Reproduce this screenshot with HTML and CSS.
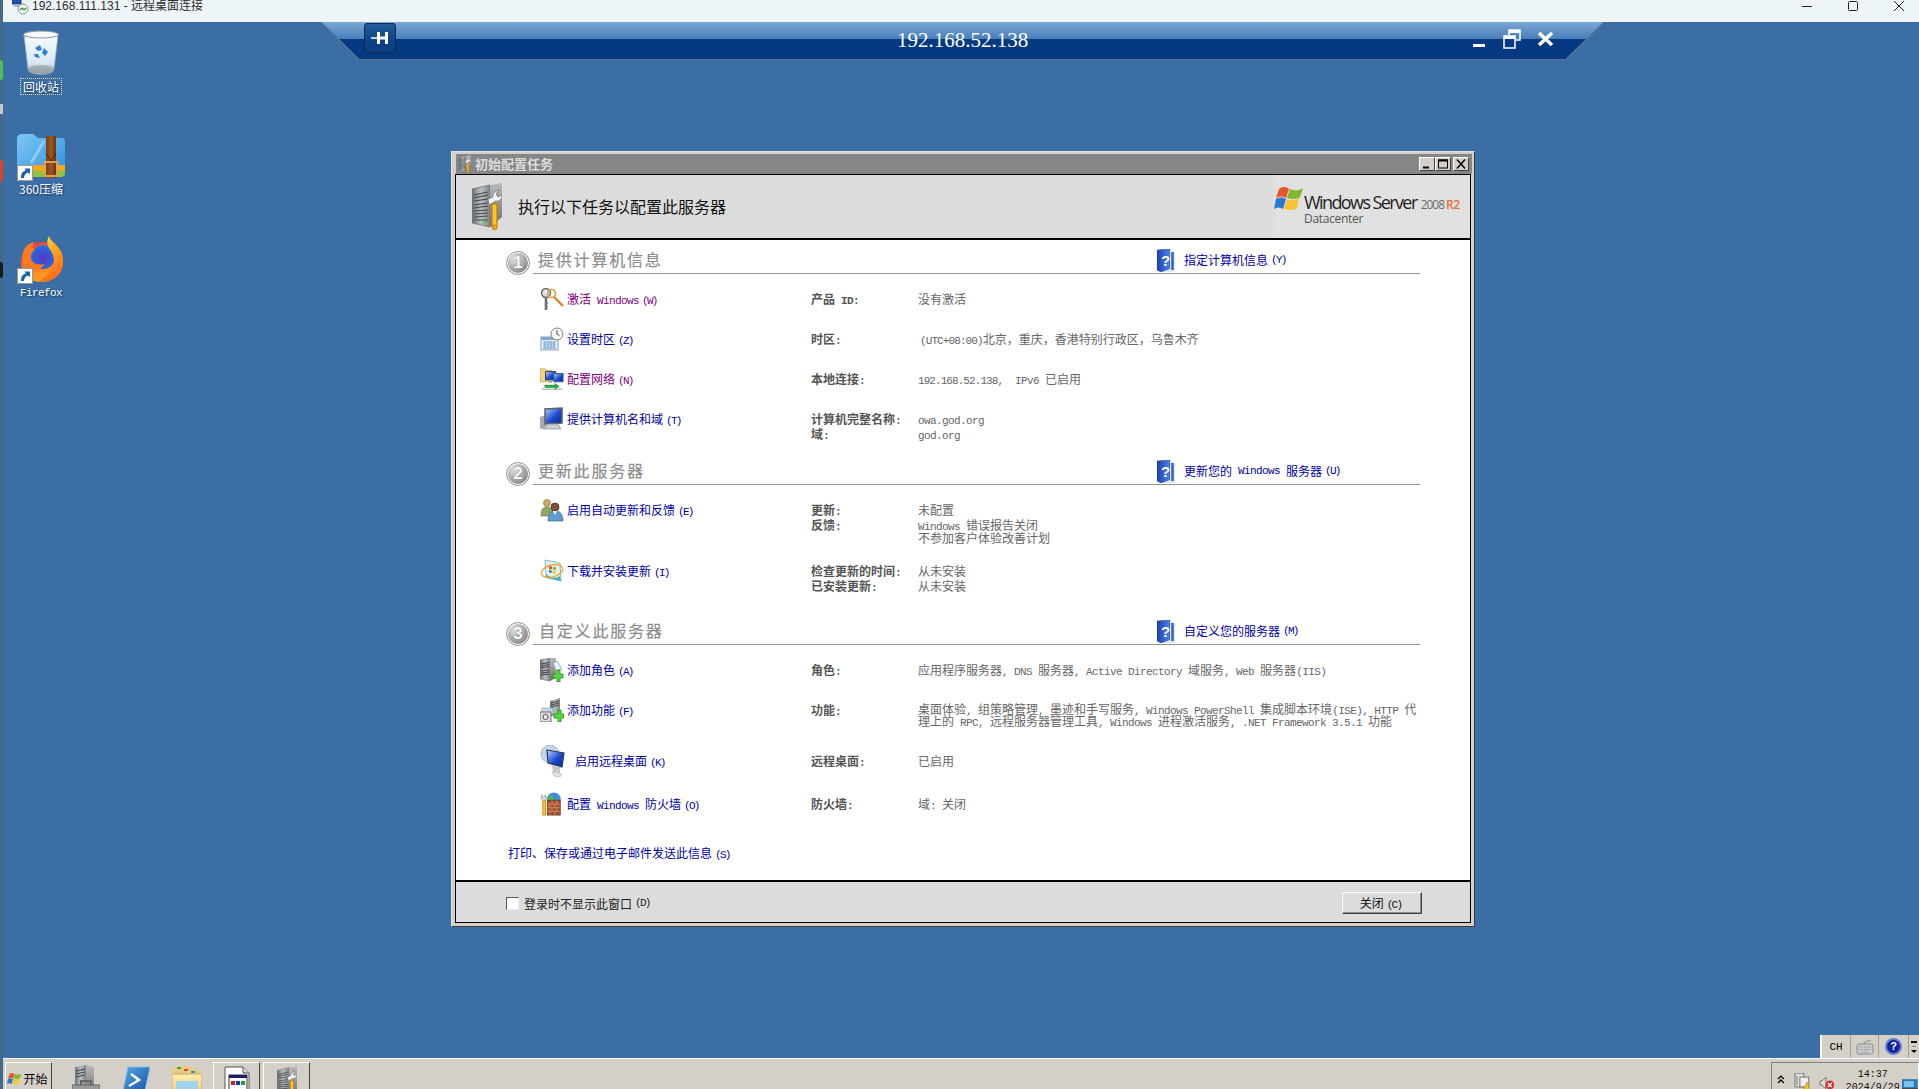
FILE: index.html
```html
<!DOCTYPE html>
<html lang="zh-CN">
<head>
<meta charset="utf-8">
<title>192.168.111.131 - 远程桌面连接</title>
<link rel="stylesheet" href="styles.css">
</head>
<body>
<svg class="defs" aria-hidden="true">
<defs>
<linearGradient id="gFront" x1="0" y1="0" x2="1" y2="0"><stop offset="0" stop-color="#6e7378"/><stop offset=".5" stop-color="#b9bec2"/><stop offset="1" stop-color="#7f8488"/></linearGradient>
<linearGradient id="gSide" x1="0" y1="0" x2="0" y2="1"><stop offset="0" stop-color="#b8b8b8"/><stop offset="1" stop-color="#707070"/></linearGradient>
<linearGradient id="gBlueScreen" x1="0" y1="0" x2="1" y2="1"><stop offset="0" stop-color="#bcd6fa"/><stop offset=".55" stop-color="#1c49d0"/><stop offset="1" stop-color="#0a2590"/></linearGradient>
<linearGradient id="gBook" x1="0" y1="0" x2="1" y2="0"><stop offset="0" stop-color="#1b3fb3"/><stop offset="1" stop-color="#4f86e8"/></linearGradient>
<linearGradient id="gBin" x1="0" y1="0" x2="0" y2="1"><stop offset="0" stop-color="#f6fbfe"/><stop offset=".72" stop-color="#d8e8f3"/><stop offset="1" stop-color="#8d979d"/></linearGradient>
<linearGradient id="gZip" x1="0" y1="0" x2="1" y2="1"><stop offset="0" stop-color="#7cc8f6"/><stop offset="1" stop-color="#2f8fdc"/></linearGradient>
<linearGradient id="gBelt" x1="0" y1="0" x2="1" y2="0"><stop offset="0" stop-color="#7a3c12"/><stop offset=".5" stop-color="#9a5a22"/><stop offset="1" stop-color="#6a3210"/></linearGradient>
<radialGradient id="gGlobe" cx=".5" cy=".55" r=".6"><stop offset="0" stop-color="#5a35c8"/><stop offset=".7" stop-color="#2b62dc"/><stop offset="1" stop-color="#2a86e8"/></radialGradient>
<linearGradient id="gFox" x1="0" y1="0" x2=".4" y2="1"><stop offset="0" stop-color="#ffe23a"/><stop offset=".5" stop-color="#ffa51e"/><stop offset="1" stop-color="#ff6a1e"/></linearGradient>
<linearGradient id="gFoxL" x1="0" y1="0" x2=".4" y2="1"><stop offset="0" stop-color="#ee2f44"/><stop offset=".5" stop-color="#ff6a24"/><stop offset="1" stop-color="#ffa01e"/></linearGradient>
<linearGradient id="gFolder" x1="0" y1="0" x2="0" y2="1"><stop offset="0" stop-color="#fff0b4"/><stop offset="1" stop-color="#e8c46a"/></linearGradient>
<linearGradient id="gPs" x1="0" y1="0" x2="1" y2="1"><stop offset="0" stop-color="#5aa6e2"/><stop offset="1" stop-color="#0f4ea0"/></linearGradient>

<symbol id="flag" viewBox="0 0 30 28">
<path d="M5 4C9 1 13 2 15 4L12 13C9 11 6 11 2 13Z" fill="#e8542c"/>
<path d="M16 4C20 6 25 6 29 3L26 12C22 15 17 14 13 13Z" fill="#7fb828"/>
<path d="M2 14C5 12 9 12 12 14L9 24C6 22 3 22 0 24Z" fill="#2a78d0"/>
<path d="M13 14C17 16 21 16 25 13L23 23C19 26 14 25 10 24Z" fill="#f7c52e"/>
</symbol>

<symbol id="config" viewBox="0 0 30 47">
<path d="M0 6 18 2V44L0 40Z" fill="url(#gFront)" stroke="#5b5f63" stroke-width=".6"/>
<path d="M2 12 16 9M2 15 16 12M2 18 16 16M2 22 16 20M2 25 16 23M2 28 16 27M2 31 16 30M2 34 16 33M2 37 16 37" stroke="#43484c" stroke-width="1.2"/>
<path d="M18 2 30 0V34L18 44Z" fill="url(#gSide)"/>
<rect x="11" y="38" width="3" height="2.4" fill="#4ed43a"/>
<path d="M16 16 21 14C20 11 23 8 27 7L24 11 26 14 30 12C30 16 27 19 24 18L17 22Z" fill="#f4f4f4" stroke="#6a6a6a" stroke-width=".7"/>
<rect x="20" y="21" width="5" height="23" fill="#f7c52e" stroke="#c67a10" stroke-width="1.2"/>
<rect x="20.6" y="42" width="4" height="5" rx="1.5" fill="#eaa518" stroke="#c67a10" stroke-width=".8"/>
</symbol>

<symbol id="help" viewBox="0 0 18 23">
<path d="M0 1 13 0V20L4 23 0 21Z" fill="url(#gBook)" stroke="#1b3590" stroke-width=".5"/>
<path d="M13 1.500 18 3V23H5L13 20Z" fill="#dfe8f6"/>
<path d="M15.500 3V21" stroke="#2f5fd0" stroke-width="2.500"/>
<text x="4" y="17" class="help-q">?</text>
</symbol>

<symbol id="key" viewBox="0 0 24 24">
<circle cx="6" cy="6" r="4.500" fill="#d9dee2" stroke="#5d6368" stroke-width="1.300"/>
<circle cx="6" cy="5" r="1.400" fill="#fff"/>
<path d="M6 10V23" stroke="#6d7378" stroke-width="2.600"/>
<path d="M6 16H8M6 20H8" stroke="#6d7378" stroke-width="1.200"/>
<circle cx="11.500" cy="6.500" r="4" fill="none" stroke="#e0a040" stroke-width="1.700"/>
<path d="M14 10 23 19" stroke="#e5802a" stroke-width="2.400"/>
</symbol>

<symbol id="clock" viewBox="0 0 24 24">
<rect x="1" y="10" width="17" height="13" fill="#e8f0f8" stroke="#8ba4bb"/>
<rect x="1" y="10" width="17" height="3" fill="#7fa7d4"/>
<path d="M3 15H16M3 17H16M3 19H16M3 21H16M5 14V22M8 14V22M11 14V22M14 14V22" stroke="#6c9ccb" stroke-width=".8"/>
<circle cx="17" cy="7" r="6" fill="#f7f7f7" stroke="#7d8185"/>
<path d="M17 3V7L19.500 8.500" stroke="#505050" fill="none"/>
</symbol>

<symbol id="network" viewBox="0 0 26 26">
<path d="M0 2H5L7 3.500H13V16H0Z" fill="#f2d382" stroke="#b89340" stroke-width=".7"/>
<rect x="6" y="5" width="11" height="9" fill="url(#gBlueScreen)" stroke="#26365e"/>
<rect x="15" y="7" width="10" height="9" fill="url(#gBlueScreen)" stroke="#3a5a8e"/>
<rect x="10" y="14" width="3" height="3" fill="#9aa0a6"/>
<path d="M3 19H17L22 22H6Z" fill="#c3c7cb"/>
<path d="M5 21H17" stroke="#29a83a" stroke-width="3"/>
<path d="M16 17 21 21 16 25Z" fill="#29a83a"/>
<path d="M2 24H24" stroke="#8a8e92"/>
</symbol>

<symbol id="computer" viewBox="0 0 24 24">
<path d="M0 10 6 8V21L0 22Z" fill="#a6abb0"/>
<path d="M5 2 22 1V16L5 17Z" fill="url(#gBlueScreen)" stroke="#55606e" stroke-width="1.500"/>
<path d="M8 17H18L21 22H3Z" fill="#c8cdd2" stroke="#878c91" stroke-width=".7"/>
</symbol>

<symbol id="users" viewBox="0 0 24 24">
<circle cx="7" cy="5" r="3.500" fill="#d2a86a" stroke="#8e6c3a" stroke-width=".6"/>
<path d="M1 18C1 11 3 9 7 9 11 9 13 11 13 18Z" fill="#8da668" stroke="#5f7a3f" stroke-width=".6"/>
<circle cx="15" cy="9" r="4" fill="#7b5232" stroke="#3e2a18" stroke-width=".7"/>
<path d="M8 23C8 16 11 13 15 13 20 13 23 16 23 23Z" fill="#5d9ccc" stroke="#2e6088" stroke-width=".6"/>
<path d="M13 13 15 17 17 13Z" fill="#eef4fa"/>
</symbol>

<symbol id="update" viewBox="0 0 24 24">
<path d="M5 1 20 4 21 22 6 18Z" fill="#dff2f2" stroke="#6ab0b0" stroke-width=".8"/>
<path d="M9 7 12 7.500 11.800 10.500 9 10Z" fill="#e8542c"/>
<path d="M13 7.700 16 8.300 15.800 11 12.800 10.600Z" fill="#7fb828"/>
<path d="M9 11 11.800 11.400 11.600 14 9 13.500Z" fill="#2a78d0"/>
<path d="M12.800 11.600 15.800 12 15.600 14.800 12.600 14.200Z" fill="#f7c52e"/>
<path d="M6 19 21 22 20 17C16 20 10 19 6 15Z" fill="#4bb0c0"/>
<ellipse cx="12" cy="12" rx="11" ry="6" fill="none" stroke="#f0a030" stroke-width="1.300" transform="rotate(-15 12 12)"/>
</symbol>

<symbol id="addrole" viewBox="0 0 24 24">
<path d="M0 2 10 0V23L0 21Z" fill="url(#gFront)" stroke="#5b5f63" stroke-width=".5"/>
<path d="M1 6 9 4.500M1 8 9 6.500M1 10 9 8.500M1 13 9 12M1 15 9 14M1 17 9 16" stroke="#3e4347"/>
<path d="M10 0 16 0V20L10 23Z" fill="url(#gSide)"/>
<path d="M13 5 17 3 22 11 16 13Z" fill="#e8f1fa" stroke="#6d90b8" stroke-width=".7"/>
<path d="M14 15H18V11H21V15H24V19H21V23H18V19H14Z" transform="translate(-1 1)" fill="#57d63f" stroke="#1f8e1a" stroke-width=".8"/>
</symbol>

<symbol id="addfeat" viewBox="0 0 24 24">
<path d="M10 3 20 0V18H10Z" fill="url(#gFront)"/>
<path d="M11 5 19 3M11 7 19 5M11 9 19 7" stroke="#3e4347"/>
<rect x="2" y="10" width="11" height="6" fill="#c8d6ee" stroke="#8b96a8" stroke-width=".6"/>
<rect x="0" y="14" width="11" height="10" fill="#dcdcdc" stroke="#555" stroke-width=".8"/>
<circle cx="5.500" cy="19" r="2.500" fill="#fff" stroke="#444"/>
<path d="M14 16H18V12H21V16H24V20H21V24H18V20H14Z" fill="#57d63f" stroke="#1f8e1a" stroke-width=".8"/>
</symbol>

<symbol id="remote" viewBox="0 0 28 32">
<circle cx="10" cy="9" r="9" fill="#c5d6e6" stroke="#8ea3b6" stroke-width=".7"/>
<path d="M7 5 24 8 22 22 8 18Z" fill="url(#gBlueScreen)" stroke="#2d3950" stroke-width="1.200"/>
<path d="M12 20 20 22V28L13 27Z" fill="#c4c8cc"/>
<path d="M12 27 22 29 20 32 14 31Z" fill="#e4e6e8" stroke="#9a9ea2" stroke-width=".5"/>
</symbol>

<symbol id="firewall" viewBox="0 0 24 26">
<circle cx="14" cy="8" r="7.500" fill="#3b8edc"/>
<path d="M9 4C12 2 15 6 13 9 11 11 8 9 7.500 7ZM16 8C19 7 21 9 20 12L17 13Z" fill="#58b548"/>
<path d="M7 9H21V25H7Z" fill="#a6532c" stroke="#5e2c14" stroke-width=".8"/>
<path d="M7 13H21M7 17H21M7 21H21M12 9V13M17 9V13M10 13V17M15 13V17M12 17V21M17 17V21M10 21V25M15 21V25" stroke="#d9a284" stroke-width=".7"/>
<rect x="2" y="9" width="3" height="16" fill="#f7c52e" stroke="#c67a10" stroke-width=".8"/>
<path d="M0 7 3 10 6 7 5 3 3.500 6 2.500 6 1 3Z" fill="#d8d8d8" stroke="#777" stroke-width=".5"/>
</symbol>

<symbol id="shortcut" viewBox="0 0 16 16">
<rect x=".5" y=".5" width="15" height="15" fill="#fff" stroke="#9a9a9a"/>
<path d="M4 13C4 8 6 6 9 5.500L7.500 3.500H13V9L11 7.500C9 8 7 10 7 13Z" fill="#1a62b0"/>
</symbol>
</defs>
</svg>

<header class="rdbar">
<svg class="rdbar-icon" viewBox="0 0 17 16" aria-hidden="true"><rect x="0" y="-6" width="9" height="10" fill="#2550b0" stroke="#18307a"/><rect x="2" y="4" width="7" height="3" fill="#aab4c4"/><circle cx="11" cy="9" r="5" fill="#f2f6f2" stroke="#8a928a"/><path d="M8 10 10 8 11 9M14 8 12 10 11 9" stroke="#2a8a3a" fill="none" stroke-width="1.200"/></svg>
<span class="rdbar-title">192.168.111.131 - 远程桌面连接</span>
<div class="rdbar-ctrls">
<svg class="wc" viewBox="0 0 46 24" aria-hidden="true"><path d="M18 6.500H28" stroke="#222"/></svg>
<svg class="wc" viewBox="0 0 46 24" aria-hidden="true"><rect x="18.500" y="1.500" width="9" height="9" rx="1" fill="none" stroke="#222"/></svg>
<svg class="wc" viewBox="0 0 46 24" aria-hidden="true"><path d="M18 1 28 11M28 1 18 11" stroke="#222" fill="none"/></svg>
</div>
</header>

<main class="desk">
<div class="edge">
<i class="edge-green"></i><i class="edge-tick"></i><i class="edge-red"></i><i class="edge-black"></i>
</div>

<div class="rdp">
<svg class="rdp-shape" viewBox="0 0 1283 38" preserveAspectRatio="none" aria-hidden="true">
<defs><linearGradient id="gRdp" x1="0" y1="0" x2="0" y2="1"><stop offset="0" stop-color="#7ca7d6"/><stop offset=".46" stop-color="#487eb9"/><stop offset=".47" stop-color="#053a82"/><stop offset="1" stop-color="#053a82"/></linearGradient></defs>
<path d="M0 0H1283L1245 37H38Z" fill="url(#gRdp)"/>
<path d="M0 0 38 37.500H1245L1283 0" fill="none" stroke="#5f7690" stroke-width="1.200"/>
</svg>
<button class="rdp-pin" type="button" aria-label="pin">
<svg viewBox="0 0 20 16" aria-hidden="true"><path d="M1 8H7" stroke="#fff" stroke-width="1.500"/><path d="M7 2H10V6.500H15V2H18V14H15V9.500H10V14H7Z" fill="#fff"/></svg>
</button>
<div class="rdp-ip">192.168.52.138</div>
<div class="rdp-ctrls">
<svg class="rc-min" viewBox="0 0 16 4" aria-hidden="true"><rect width="16" height="4" fill="#fff"/></svg>
<svg class="rc-res" viewBox="0 0 18 20" aria-hidden="true"><path d="M6 6V1H17V11H12" fill="none" stroke="#fff" stroke-width="1.500"/><rect x="6" y="1" width="11" height="3" fill="#fff"/><rect x="1" y="7" width="11" height="12" fill="#053a82" stroke="#fff" stroke-width="1.500"/><rect x="1" y="7" width="11" height="3" fill="#fff"/></svg>
<svg class="rc-x" viewBox="0 0 17 14" aria-hidden="true"><path d="M2 1 15 13M15 1 2 13" stroke="#fff" stroke-width="3.500"/></svg>
</div>
</div>

<div class="dicon dicon-bin">
<svg class="dicon-img bin" viewBox="0 0 36 46" aria-hidden="true">
<path d="M1 5 35 5 31 39C30 46 6 46 5 39Z" fill="url(#gBin)" stroke="#a8b6bf" stroke-width=".7"/>
<ellipse cx="18" cy="4.500" rx="17.500" ry="3.500" fill="#f4f8fb" stroke="#8c949a"/>
<ellipse cx="18" cy="40" rx="13" ry="5" fill="#9aa2a8" opacity=".7"/>
<path d="M12 18 17 15 19 20 15 21ZM21 18 25 22 22 26 19 23ZM11 24 15 24 17 28 12 27Z" fill="#2f7ed8"/>
</svg>
<span class="dicon-label selected">回收站</span>
</div>

<div class="dicon dicon-zip">
<svg class="dicon-img zip" viewBox="0 0 48 48" aria-hidden="true">
<path d="M0 6C0 3 2 1 5 1H16L21 5H45C47 5 48 6 48 8V38C48 42 46 44 43 44H5C2 44 0 42 0 38Z" fill="url(#gZip)"/>
<path d="M0 32H48V38H0Z" fill="#f6a81c"/><path d="M0 38H48V40C48 43 46 44 43 44H5C2 44 0 43 0 40Z" fill="#8cc63e"/>
<path d="M14 30 27 8" stroke="#b5e2fa" stroke-width="3" opacity=".6"/>
<path d="M29 3H39V45H29Z" fill="url(#gBelt)"/>
<path d="M29 20 34 28 39 20" fill="none" stroke="#4e2408"/>
<rect x="27.500" y="29" width="13" height="14" fill="none" stroke="#e0a050" stroke-width="2"/>
</svg>
<svg class="overlay" aria-hidden="true"><use href="#shortcut"/></svg>
<span class="dicon-label">360压缩</span>
</div>

<div class="dicon dicon-ff">
<svg class="dicon-img ff" viewBox="0 0 44 46" aria-hidden="true">
<circle cx="22" cy="26" r="20" fill="url(#gFoxL)"/>
<circle cx="24" cy="21" r="12" fill="url(#gGlobe)"/>
<path d="M30 0C31 6 42 9 44 22 46 36 36 46 22 46 16 46 26 42 31 35 36 29 36 21 32 15 28 10 27 6 30 0Z" fill="url(#gFox)"/>
<path d="M6 12C8 9 11 7 15 6 13 10 14 13 16 14 11 17 10 21 13 25 16 29 22 29 26 28 22 33 15 37 9 34 3 30 2 19 6 12Z" fill="#ff7a1e"/>
</svg>
<svg class="overlay" aria-hidden="true"><use href="#shortcut"/></svg>
<span class="dicon-label mono">Firefox</span>
</div>

<section class="dialog">
<div class="dlg-title">
<svg class="dlg-title-icon" aria-hidden="true"><use href="#config"/></svg>
<span class="dlg-title-text">初始配置任务</span>
<div class="dlg-btns">
<span class="tbtn"><svg viewBox="0 0 14 11" aria-hidden="true"><rect x="3" y="8" width="6" height="2" fill="#000"/></svg></span>
<span class="tbtn"><svg viewBox="0 0 14 11" aria-hidden="true"><rect x="2.500" y="1.500" width="9" height="8" fill="none" stroke="#000"/><rect x="2" y="1" width="10" height="2" fill="#000"/></svg></span>
<span class="tbtn tbtn-close"><svg viewBox="0 0 14 11" aria-hidden="true"><path d="M3 1 11 10M11 1 3 10" stroke="#000" stroke-width="1.500"/></svg></span>
</div>
</div>

<div class="frame">
<div class="dlg-head">
<svg class="dlg-head-icon" aria-hidden="true"><use href="#config"/></svg>
<h1 class="dlg-head-text">执行以下任务以配置此服务器</h1>
<div class="logo">
<svg class="logo-flag" aria-hidden="true"><use href="#flag"/></svg>
<div class="logo-text">
<div class="logo-l1"><span class="logo-ws">Windows Server</span><span class="logo-yr">2008</span><span class="logo-r2">R2</span></div>
<div class="logo-dc">Datacenter</div>
</div>
</div>
</div>

<div class="dlg-body">
<div class="sec-head">
<span class="num">1</span>
<div class="sec-main">
<h2 class="sec-title">提供计算机信息</h2>
<a class="help"><svg class="help-icon" aria-hidden="true"><use href="#help"/></svg>指定计算机信息<span class="k">(Y)</span></a>
</div>
</div>
<div class="rows">
<div class="row h40"><svg class="ico" aria-hidden="true"><use href="#key"/></svg><a class="lnk vis">激活<span class="la"> Windows</span><span class="k">(W)</span></a><b class="lbl">产品<span class="la"> ID:</span></b><div class="val">没有激活</div></div>
<div class="row h40"><svg class="ico" aria-hidden="true"><use href="#clock"/></svg><a class="lnk">设置时区<span class="k">(Z)</span></a><b class="lbl">时区<span class="la">:</span></b><div class="val"><span class="la ind">(UTC+08:00)</span>北京，重庆，香港特别行政区，乌鲁木齐</div></div>
<div class="row h40"><svg class="ico" aria-hidden="true"><use href="#network"/></svg><a class="lnk vis">配置网络<span class="k">(N)</span></a><b class="lbl">本地连接<span class="la">:</span></b><div class="val"><span class="la tight">192.168.52.138,</span><span class="la">  IPv6 </span>已启用</div></div>
<div class="row h48"><svg class="ico" aria-hidden="true"><use href="#computer"/></svg><a class="lnk">提供计算机名和域<span class="k">(T)</span></a><b class="lbl">计算机完整名称<span class="la">:</span><br>域<span class="la">:</span></b><div class="val"><span class="la">owa.god.org</span><br><span class="la">god.org</span></div></div>
</div>

<div class="sec-head">
<span class="num">2</span>
<div class="sec-main">
<h2 class="sec-title">更新此服务器</h2>
<a class="help"><svg class="help-icon" aria-hidden="true"><use href="#help"/></svg>更新您的<span class="la"> Windows </span>服务器<span class="k">(U)</span></a>
</div>
</div>
<div class="rows">
<div class="row h61"><svg class="ico" aria-hidden="true"><use href="#users"/></svg><a class="lnk">启用自动更新和反馈<span class="k">(E)</span></a><b class="lbl">更新<span class="la">:</span><br>反馈<span class="la">:</span></b><div class="val">未配置<br><span class="la">Windows </span>错误报告关闭<div class="tight-line">不参加客户体验改善计划</div></div></div>
<div class="row h56"><svg class="ico" aria-hidden="true"><use href="#update"/></svg><a class="lnk">下载并安装更新<span class="k">(I)</span></a><b class="lbl">检查更新的时间<span class="la">:</span><br>已安装更新<span class="la">:</span></b><div class="val">从未安装<br>从未安装</div></div>
</div>

<div class="sec-head">
<span class="num">3</span>
<div class="sec-main">
<h2 class="sec-title sec-title-3">自定义此服务器</h2>
<a class="help"><svg class="help-icon" aria-hidden="true"><use href="#help"/></svg>自定义您的服务器<span class="k">(M)</span></a>
</div>
</div>
<div class="rows">
<div class="row h40"><svg class="ico" aria-hidden="true"><use href="#addrole"/></svg><a class="lnk">添加角色<span class="k">(A)</span></a><b class="lbl">角色<span class="la">:</span></b><div class="val">应用程序服务器<span class="la">, DNS </span>服务器<span class="la">, Active Directory </span>域服务<span class="la">, Web </span>服务器<span class="la">(IIS)</span></div></div>
<div class="row h51"><svg class="ico" aria-hidden="true"><use href="#addfeat"/></svg><a class="lnk">添加功能<span class="k">(F)</span></a><b class="lbl">功能<span class="la">:</span></b><div class="val lh12"><div class="nw">桌面体验<span class="la">, </span>组策略管理<span class="la">, </span>墨迹和手写服务<span class="la">, Windows PowerShell </span>集成脚本环境<span class="la">(ISE), HTTP </span>代</div><div class="nw">理上的<span class="la"> RPC, </span>远程服务器管理工具<span class="la">, Windows </span>进程激活服务<span class="la">, .NET Framework 3.5.1 </span>功能</div></div></div>
<div class="row h43"><svg class="ico ico-rd" aria-hidden="true"><use href="#remote"/></svg><a class="lnk lnk-rd">启用远程桌面<span class="k">(K)</span></a><b class="lbl">远程桌面<span class="la">:</span></b><div class="val">已启用</div></div>
<div class="row h49"><svg class="ico" aria-hidden="true"><use href="#firewall"/></svg><a class="lnk">配置<span class="la"> Windows </span>防火墙<span class="k">(O)</span></a><b class="lbl">防火墙<span class="la">:</span></b><div class="val">域<span class="la">: </span>关闭</div></div>
</div>
<a class="print">打印、保存或通过电子邮件发送此信息<span class="k">(S)</span></a>
</div>

<div class="dlg-foot">
<label class="chk"><span class="chk-box"></span>登录时不显示此窗口<span class="k">(D)</span></label>
<button class="close-btn" type="button">关闭<span class="k">(C)</span></button>
</div>
</div>
</section>

<div class="langbar">
<span class="lb-cell lb-ch">CH</span>
<span class="lb-cell"><svg class="lb-kbd" viewBox="0 0 18 16" aria-hidden="true"><path d="M15 1C13 3 9 1 8 5" fill="none" stroke="#8a8a8a"/><rect x="1" y="5" width="16" height="10" rx="2" fill="#cfcfcf" stroke="#8a8a8a"/><path d="M3 8H15M3 10.500H15M5 13H13" stroke="#8a8a8a" stroke-dasharray="1.500 1"/></svg></span>
<span class="lb-cell lb-hcell"><span class="lb-help">?</span></span>
<span class="lb-cell lb-opts"><svg viewBox="0 0 8 14" aria-hidden="true"><rect x="1" y="1" width="6" height="2" fill="#000"/><rect x="2" y="6" width="4" height="1" fill="#888"/><path d="M1 10H7L4 13Z" fill="#000"/></svg></span>
</div>
</main>

<footer class="taskbar">
<button class="start" type="button"><svg class="start-flag" aria-hidden="true"><use href="#flag"/></svg>开始</button>
<div class="ql">
<svg class="ql-ico" viewBox="0 0 28 30" aria-hidden="true"><path d="M3 2 14 0V30H3Z" fill="url(#gFront)"/><path d="M4 6 13 4M4 9 13 7M4 12 13 10" stroke="#3e4347"/><path d="M14 0 22 2V30H14Z" fill="url(#gSide)"/><rect x="0" y="20" width="28" height="10" fill="#9b9b9b" stroke="#666"/><path d="M9 20V16H19V20" fill="none" stroke="#666" stroke-width="2"/></svg>
<svg class="ql-ico" viewBox="0 0 28 30" aria-hidden="true"><path d="M6 2H28L22 30H0Z" fill="url(#gPs)" stroke="#7fc0ee"/><path d="M9 9 17 15 7 21" fill="none" stroke="#fff" stroke-width="2.500"/></svg>
<svg class="ql-ico ql-fold" viewBox="0 0 30 30" aria-hidden="true"><path d="M2 3 8 1 14 1 28 5V30H0V5Z" fill="#eacb80"/><rect x="5" y="2" width="4" height="2" fill="#3bae3b"/><rect x="12" y="4" width="4" height="2" fill="#d84a3a"/><rect x="19" y="6" width="4" height="2" fill="#2a90e0"/><rect x="0" y="9" width="30" height="21" fill="url(#gFolder)" stroke="#c9a75a"/><rect x="4" y="16" width="22" height="14" fill="#9fd3ec"/></svg>
</div>
<div class="tasks">
<button class="task" type="button" aria-label="task"><svg viewBox="0 0 26 30" aria-hidden="true"><path d="M1 1H19L25 7V30H1Z" fill="#fff" stroke="#555"/><path d="M19 1V7H25" fill="#ddd" stroke="#555"/><rect x="5" y="9" width="18" height="17" fill="#fff" stroke="#333"/><rect x="5" y="9" width="18" height="3" fill="#16206e"/><rect x="7" y="15" width="4" height="4" fill="#d02020"/><rect x="12" y="15" width="4" height="4" fill="#2030c0"/><rect x="17" y="15" width="4" height="4" fill="#20a030"/></svg></button>
<button class="task" type="button" aria-label="task"><svg class="task-cfg" aria-hidden="true"><use href="#config"/></svg></button>
</div>
<div class="tray">
<svg class="tr-chev" viewBox="0 0 8 10" aria-hidden="true"><path d="M1 4 4 1 7 4M1 8 4 5 7 8" fill="none" stroke="#000" stroke-width="1.300"/></svg>
<svg class="tr-net" viewBox="0 0 16 18" aria-hidden="true"><rect x="1" y="0" width="9" height="14" fill="#ddd" stroke="#777"/><rect x="6" y="4" width="9" height="10" fill="#eee" stroke="#777"/><path d="M3 3V12" stroke="#777"/><path d="M9 18 13 9 17 18Z" fill="#f7c52e" stroke="#b08000" stroke-width=".6"/></svg>
<svg class="tr-snd" viewBox="0 0 16 14" aria-hidden="true"><path d="M1 5H3L7 1V13L3 9H1Z" fill="#ddd" stroke="#777"/><circle cx="11" cy="9" r="4.500" fill="#e02a30"/><path d="M9 7 13 11M13 7 9 11" stroke="#fff" stroke-width="1.300"/></svg>
<div class="clock"><span>14:37</span><span>2024/9/29</span></div>
<svg class="tr-show" viewBox="0 0 16 18" aria-hidden="true"><rect width="16" height="13" fill="#2a79b8"/><rect y="9" width="16" height="4" fill="#4a4a4a"/><rect x="2" y="2" width="10" height="6" fill="#7cc2ea"/></svg>
</div>
</footer>
</body>
</html>
```
FILE: styles.css
```css
* { box-sizing: border-box; }
html, body { margin: 0; height: 100%; }
body {
  width: 1919px;
  height: 1089px;
  overflow: hidden;
  display: flex;
  flex-direction: column;
  font-family: "Noto Sans CJK SC", "Liberation Sans", sans-serif;
  font-size: 12px;
  background: #44698a;
}
.defs { position: absolute; width: 0; height: 0; }

/* Host remote-desktop title bar */
.rdbar {
  height: 22px;
  flex: none;
  display: flex;
  background: #eef5f9;
  margin-left: 3px;
  align-items: flex-start;
  overflow: hidden;
  position: relative;
}
.rdbar-icon { width: 17px; height: 16px; margin-left: 9px; flex: none; }
.rdbar-title { margin-left: 3px; margin-top: -3px; line-height: 18px; font-size: 12px; color: #2c2c2c; font-family: "Liberation Sans", "Noto Sans CJK SC", sans-serif; }
.rdbar-ctrls { margin-left: auto; display: flex; margin-right: -3px; }
.wc { width: 46px; height: 24px; }

.desk { flex: 1; position: relative; background: #3a6ea5; overflow: hidden; }
.edge { position: absolute; left: -3px; top: -22px; width: 6px; height: 1089px; background: #44698a; }
.edge i { position: absolute; left: 0; width: 6px; display: block; }
.edge-green { top: 60px; height: 20px; background: #4fc04f; border-radius: 4px; }
.edge-tick { top: 104px; height: 10px; background: #c8c8c8; }
.edge-red { top: 160px; height: 22px; background: #e0431f; border-radius: 4px; }
.edge-black { top: 262px; height: 16px; background: #1a1a1a; border-radius: 4px; }

/* RDP connection bar */
.rdp { position: absolute; left: 321px; top: 0; width: 1283px; height: 38px; color: #fff; }
.rdp-shape { position: absolute; inset: 0; width: 100%; height: 100%; }
.rdp-pin {
  position: absolute; left: 43px; top: 1px; width: 32px; height: 30px; padding: 0;
  background: linear-gradient(#265c9c, #0b4488 55%, #0a3e7e);
  border: 1px solid #0e2a55; border-radius: 3px;
  display: flex; align-items: center; justify-content: center;
}
.rdp-pin svg { width: 20px; height: 16px; }
.rdp-ip {
  position: absolute; left: 0; right: 0; top: 6px; text-align: center;
  font-family: "Liberation Serif", serif; font-size: 21px; line-height: 24px;
  color: #fff;
}
.rdp-ctrls { position: absolute; inset: 0; }
.rdp-ctrls svg { position: absolute; }
.rc-min { left: 1150px; top: 22px; width: 16px; height: 3px; }
.rc-res { left: 1182px; top: 7px; width: 18px; height: 20px; }
.rc-x { left: 1216px; top: 10px; width: 17px; height: 14px; }

/* Desktop icons */
.dicon { position: absolute; left: 1px; width: 80px; display: flex; flex-direction: column; align-items: center; }
.dicon-bin { top: 8px; }
.dicon-zip { top: 111px; }
.dicon-ff { top: 214px; }
.dicon-img { display: block; flex: none; }
.bin { width: 36px; height: 46px; }
.zip { width: 48px; height: 48px; }
.ff { width: 44px; height: 46px; }
.overlay { position: absolute; left: 16px; width: 16px; height: 16px; }
.dicon-zip .overlay { top: 32px; }
.dicon-ff .overlay { top: 32px; }
.dicon-label { color: #fff; font-size: 12px; line-height: 15px; text-shadow: 1px 1px 2px #12305a; margin-top: 3px; white-space: nowrap; }
.dicon-label.selected { outline: 1px dotted #e8d8b0; padding: 0 1px; margin-top: 3px; width: 40px; text-align: center; }
.dicon-zip .dicon-label { margin-top: 0; }
.dicon-ff .dicon-label { margin-top: 4px; }
.mono { font-family: "Liberation Mono", monospace; font-size: 11px; letter-spacing: -.6px; }

/* Dialog */
.dialog {
  position: absolute; left: 451px; top: 129px; width: 1024px; height: 776px;
  background: #d4d0c8;
  border: 1px solid; border-color: #e2e2e2 #3c3c3c #3c3c3c #e2e2e2;
  padding: 2px 3px 3px;
  display: flex; flex-direction: column;
}
.dlg-title {
  height: 20px; flex: none; background: #868686; display: flex; align-items: center;
  padding: 0 2px; margin: 0 -1px 0 1px;
}
.dlg-title-icon { width: 14px; height: 18px; flex: none; }
.dlg-title-text { color: #dcdcdc; font-weight: 700; font-size: 13px; margin-left: 3px; line-height: 16px; }
.dlg-btns { margin-left: auto; display: flex; margin-right: 1px; }
.tbtn {
  width: 16px; height: 14px; background: #d4d0c8;
  border: 1px solid; border-color: #fff #404040 #404040 #fff;
  display: flex;
}
.tbtn svg { width: 14px; height: 12px; }
.tbtn-close { margin-left: 2px; }

.frame { flex: 1; min-height: 0; border: 1px solid #000; display: flex; flex-direction: column; background: #fff; }
.dlg-head {
  height: 65px; flex: none; background: #dcdcdc; border-bottom: 2px solid #000;
  display: flex; align-items: flex-start; padding-left: 16px; position: relative;
}
.dlg-head-icon { width: 30px; height: 47px; margin-top: 8px; flex: none; }
.dlg-head-text { margin: 20px 0 0 16px; font-size: 16px; font-weight: 400; line-height: 22px; color: #111; }
.logo {
  margin-left: auto; width: 197px; height: 63px; flex: none;
  background: #e2e2e2 radial-gradient(#d6d6d6 35%, transparent 40%) 0 0 / 3px 3px;
  display: flex; align-items: flex-start; padding: 10px 0 0 1px;
}
.logo-flag { width: 30px; height: 28px; flex: none; }
.logo-text { margin-left: 0; padding-top: 7px; }
.logo-l1 { display: flex; align-items: baseline; white-space: nowrap; line-height: 20px; }
.logo-ws { font-family: "Open Sans", "Liberation Sans", sans-serif; font-size: 18px; color: #222; letter-spacing: -1.6px; }
.logo-yr { font-family: "Open Sans", "Liberation Sans", sans-serif; font-size: 12px; color: #6d6d6d; letter-spacing: -1px; margin-left: 4px; }
.logo-r2 { font-family: "Open Sans", "Liberation Sans", sans-serif; font-size: 12px; font-weight: 600; color: #e8703a; letter-spacing: -.5px; margin-left: 2px; }
.logo-dc { font-family: "Open Sans", "Liberation Sans", sans-serif; font-size: 12px; color: #555; letter-spacing: -.3px; line-height: 14px; margin-top: -3px; }

.dlg-body { flex: 1; min-height: 0; background: #fff; padding: 8px 50px 0; }
.sec-head { height: 26px; display: flex; align-items: flex-end; gap: 3px; }
.num {
  width: 24px; height: 24px; margin-bottom: -1px; border-radius: 50%; flex: none;
  background: radial-gradient(circle at 35% 30%, #e4e4e4, #8a8a8a 70%, #bdbdbd);
  border: 1px solid #9a9a9a; box-shadow: inset 0 0 0 1px #fff;
  color: #fff; font: 700 17px/22px "Liberation Sans", sans-serif; text-align: center;
  text-shadow: 0 0 1px #555;
}
.sec-main { flex: 1; height: 26px; border-bottom: 1px solid #949494; display: flex; align-items: center; }
.sec-title { margin: 0; width: 624px; padding: 0 0 4px 5px; font-size: 16px; font-weight: 400; letter-spacing: 1.800px; color: #8c8c8c; line-height: 24px; flex: none; -webkit-text-stroke: .2px #8c8c8c; }
.sec-title-3 { padding-left: 6px; }
.help { display: flex; align-items: center; color: #0000a8; white-space: pre; padding-bottom: 2px; }
.help-icon { width: 18px; height: 23px; margin: 0 9px -2px 0; flex: none; }
.help-q { font: 700 15px "Liberation Sans", sans-serif; fill: #fff; }

.rows { padding: 17px 0 0 34px; }
.row { display: grid; grid-template-columns: 27px 244px 107px 1fr; align-items: start; line-height: 15px; }
.h40 { height: 40px; }
.h43 { height: 43px; }
.h48 { height: 48px; }
.h49 { height: 49px; }
.h51 { height: 51px; }
.h56 { height: 56px; }
.h61 { height: 61px; }
.ico { width: 24px; height: 24px; margin-top: -4px; display: block; }
.ico-rd { width: 28px; height: 32px; margin-top: -8px; }
.lnk { color: #0000a8; white-space: pre; }
.lnk-rd { padding-left: 8px; }
.vis { color: #800080; }
.lbl { color: #555; font-weight: 700; white-space: nowrap; }
.val { color: #666; white-space: nowrap; }
.lh12 { line-height: 12px; margin-top: 1px; }
.nw { white-space: pre; }
.tight-line { line-height: 12px; }
.la { font-family: "Liberation Mono", monospace; font-size: 11px; letter-spacing: -.6px; line-height: 0; white-space: pre; }
.lbl .la { font-weight: 700; }
.ind { margin-left: 2px; letter-spacing: -.9px; }
.tight { letter-spacing: -.93px; }
.k { font-family: "Liberation Mono", monospace; font-size: 11px; letter-spacing: -1.700px; line-height: 0; margin-left: 3px; }
.print { display: block; margin-top: 0; margin-left: 2px; color: #0000a8; line-height: 15px; }

.dlg-foot {
  height: 42px; flex: none; background: #dcdcdc; border-top: 2px solid #000;
  display: flex; align-items: center; justify-content: space-between; padding: 2px 48px 0 50px;
}
.chk { display: flex; align-items: center; color: #222; line-height: 15px; }
.chk-box { width: 13px; height: 13px; background: #fff; border: 1px solid; border-color: #555 #eee #eee #555; margin-right: 5px; }
.close-btn {
  width: 80px; height: 22px; padding: 0 3px 0 0; background: #dcdcdc; color: #111;
  border: 1px solid; border-color: #fff #404040 #404040 #fff;
  box-shadow: inset -1px -1px 0 #909090;
  font: inherit; line-height: 18px;
}

/* Language bar */
.langbar { position: absolute; right: 0; bottom: 0; height: 23px; width: 99px; background: #d4d0c8; border-left: 2px solid #fff; display: flex; }
.lb-cell { height: 23px; display: flex; align-items: center; justify-content: center; border-left: 1px solid #a0a0a0; width: 28px; flex: none; }
.lb-ch { font: 11px "Liberation Mono", monospace; color: #000; width: 28px; border-left: 0; }
.lb-kbd { width: 18px; height: 16px; }
.lb-hcell { width: 30px; }
.lb-help { width: 17px; height: 17px; border-radius: 50%; background: #1020a0; border: 2px solid #5f7fd0; color: #fff; font: 700 11px/13px "Liberation Sans", sans-serif; text-align: center; }
.lb-opts { width: 11px; }
.lb-opts svg { width: 8px; height: 14px; }

/* Taskbar */
.taskbar {
  height: 31px; flex: none; background: #d4d0c8; border-top: 1px solid #fff; margin-left: 3px;
  display: flex; align-items: flex-start; overflow: hidden; padding-top: 3px;
}
.start {
  margin-left: 2px; width: 47px; height: 40px; padding: 0 2px 7px 0; flex: none;
  background: #d4d0c8; border: 1px solid; border-color: #fff #404040 #404040 #fff;
  display: flex; align-items: center; justify-content: center; color: #000;
  font: 12px "Noto Sans CJK SC", sans-serif;
}
.start-flag { width: 15px; height: 14px; margin-right: 1px; }
.ql { display: flex; gap: 22px; margin-left: 20px; padding-top: 3px; flex: none; }
.ql-ico { width: 28px; height: 30px; flex: none; }
.ql-fold { width: 30px; }
.tasks { display: flex; gap: 3px; margin-left: 11px; flex: none; }
.task {
  width: 47px; height: 40px; padding: 3px 0 0; background: #d4d0c8; flex: none;
  border: 1px solid; border-color: #fff #404040 #404040 #fff;
  display: flex; justify-content: center; align-items: flex-start;
}
.task svg { width: 26px; height: 30px; }
.task .task-cfg { width: 20px; height: 32px; }
.tray {
  margin-left: auto; width: 148px; height: 40px; flex: none;
  border: 1px solid; border-color: #808080 #fff #fff #808080;
  display: flex; align-items: flex-start; padding-top: 7px; position: relative;
}
.tr-chev { width: 8px; height: 10px; margin: 5px 0 0 5px; }
.tr-net { width: 16px; height: 18px; margin: 3px 0 0 9px; }
.tr-snd { width: 16px; height: 14px; margin: 6px 0 0 9px; }
.clock { display: flex; flex-direction: column; align-items: center; font: 10px/13px "Liberation Mono", monospace; color: #111; margin: -2px 0 0 9px; width: 60px; }
.tr-show { width: 16px; height: 18px; margin: 9px 0 0 auto; }
```
